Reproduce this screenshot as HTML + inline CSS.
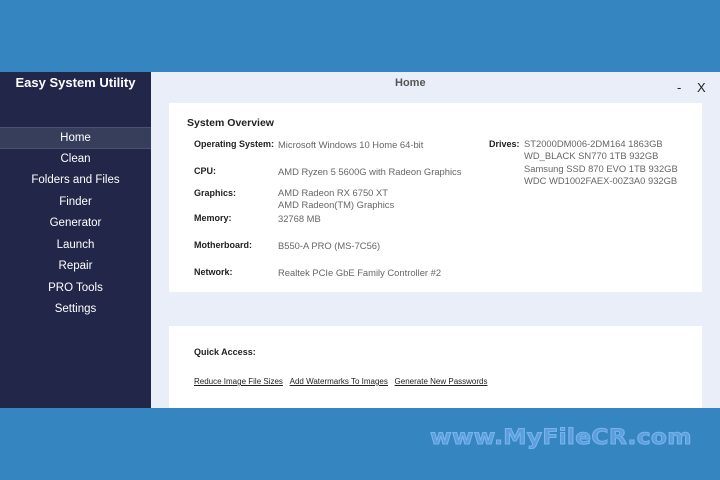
<!DOCTYPE html>
<html><head><style>
*{margin:0;padding:0;box-sizing:border-box}
body{width:720px;height:480px;background:#3485c0;position:relative;overflow:hidden;font-family:"Liberation Sans",sans-serif}
.win{position:absolute;left:0;top:72px;width:720px;height:336px;background:#eaeef8}
.side{position:absolute;left:0;top:0;width:151px;height:336px;background:#22274a;color:#fff}
.title{position:absolute;top:3px;width:151px;text-align:center;font-size:13px;font-weight:bold}
.nav{position:absolute;top:55px;width:151px}
.nav div{height:21.5px;line-height:21px;text-align:center;font-size:11.5px}
.nav .on{background:#363e5b;border-top:1px solid #4a5270;border-bottom:1px solid #4a5270}
.hdr{position:absolute;left:395px;top:5px;font-size:11px;font-weight:bold;color:#555}
.ctl{position:absolute;top:8px;font-size:13px;color:#222}
.card{position:absolute;background:#fff;left:169px;width:533px}
.t{position:absolute;font-size:9.4px;color:#666;line-height:12.3px;white-space:nowrap}
.l{position:absolute;font-size:9px;color:#222;font-weight:bold;white-space:nowrap}
.wm{position:absolute;left:430px;top:425px;font-size:21px;font-weight:900;color:#5a9ee0;letter-spacing:0.3px;-webkit-text-stroke:1px #7ab4ea;font-family:"DejaVu Sans",sans-serif;transform:scaleX(1.11);transform-origin:left}
a{color:#222;text-decoration:underline}
</style></head><body>
<div class="win">
<div class="side">
<div class="title">Easy System Utility</div>
<div class="nav">
<div class="on">Home</div><div>Clean</div><div>Folders and Files</div><div>Finder</div><div>Generator</div><div>Launch</div><div>Repair</div><div>PRO Tools</div><div>Settings</div>
</div>
</div>
<div class="hdr">Home</div>
<div class="ctl" style="left:677px">-</div>
<div class="ctl" style="left:697px">X</div>
<div class="card" style="top:31px;height:189px">
<div class="l" style="left:18px;top:14px;font-size:10.5px">System Overview</div>
<div class="l" style="left:25px;top:36px">Operating System:</div>
<div class="t" style="left:109px;top:36px">Microsoft Windows 10 Home 64-bit</div>
<div class="l" style="left:25px;top:63px">CPU:</div>
<div class="t" style="left:109px;top:63px">AMD Ryzen 5 5600G with Radeon Graphics</div>
<div class="l" style="left:25px;top:85px">Graphics:</div>
<div class="t" style="left:109px;top:84px">AMD Radeon RX 6750 XT<br>AMD Radeon(TM) Graphics</div>
<div class="l" style="left:25px;top:110px">Memory:</div>
<div class="t" style="left:109px;top:110px">32768 MB</div>
<div class="l" style="left:25px;top:137px">Motherboard:</div>
<div class="t" style="left:109px;top:137px">B550-A PRO (MS-7C56)</div>
<div class="l" style="left:25px;top:164px">Network:</div>
<div class="t" style="left:109px;top:164px">Realtek PCIe GbE Family Controller #2</div>
<div class="l" style="left:320px;top:36px">Drives:</div>
<div class="t" style="left:355px;top:35px">ST2000DM006-2DM164 1863GB<br>WD_BLACK SN770 1TB 932GB<br>Samsung SSD 870 EVO 1TB 932GB<br>WDC WD1002FAEX-00Z3A0 932GB</div>
</div>
<div class="card" style="top:254px;height:82px">
<div class="l" style="left:25px;top:21px;font-size:9px">Quick Access:</div>
<div class="t" style="left:25px;top:50px;font-size:8px;color:#222"><a>Reduce Image File Sizes</a>&nbsp;&nbsp;&nbsp;<a>Add Watermarks To Images</a>&nbsp;&nbsp;&nbsp;<a>Generate New Passwords</a></div>
</div>
</div>
<div class="wm">www.MyFileCR.com</div>
</body></html>
